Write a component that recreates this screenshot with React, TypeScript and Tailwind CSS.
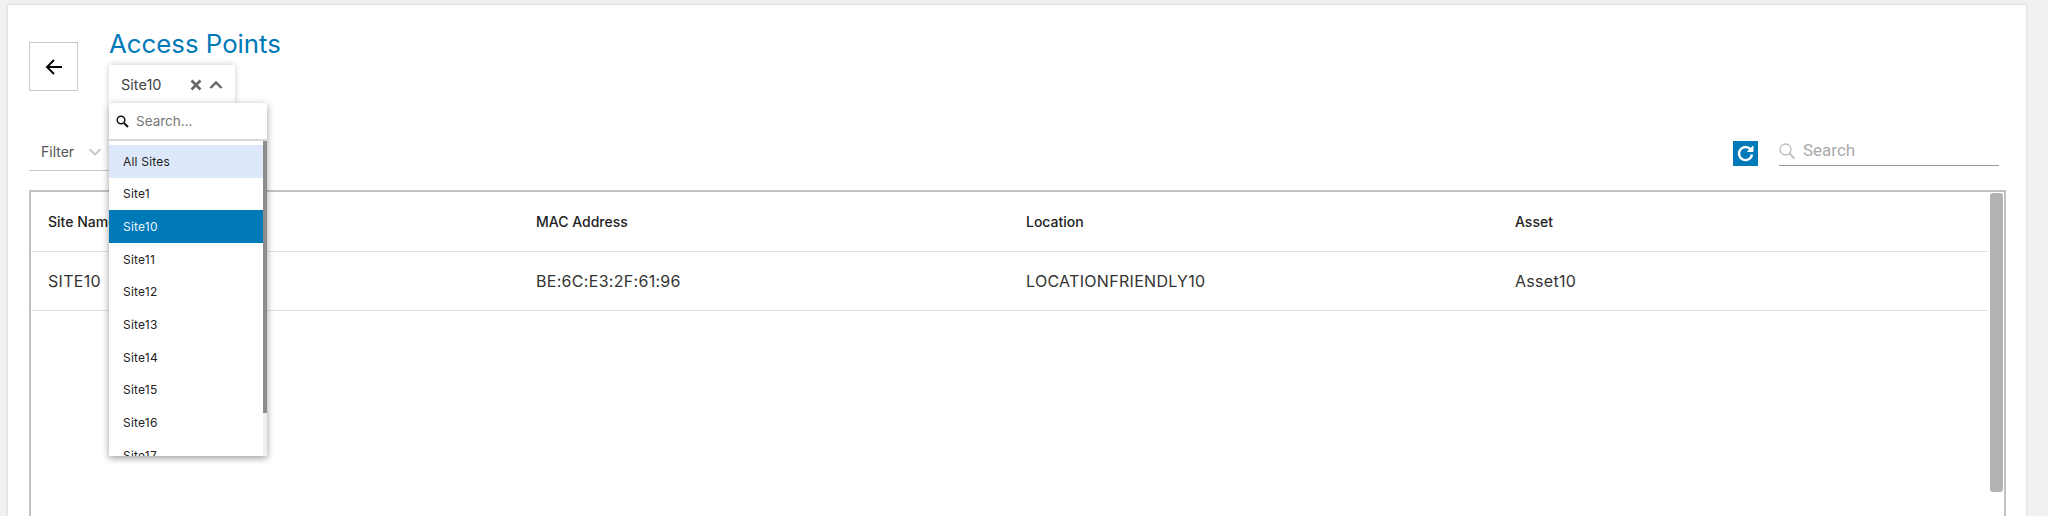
import React from "react";

const sites = ["All Sites","Site1","Site10","Site11","Site12","Site13","Site14","Site15","Site16","Site17"];

export default function App() {
  return (
    <div className="h-[516px] overflow-hidden bg-[#f1f1f1] pl-2 pr-[22px] pt-[5px] font-['Inter',sans-serif] text-[#222]">
      <div className="relative h-[600px] bg-white pl-[21px] pr-5 shadow-[0_0_3px_rgba(0,0,0,0.15)]">
        <div className="flex h-[137px] items-start gap-[31px]">
          <button className="mt-[37px] flex h-[49px] w-[49px] items-center justify-center border border-[#c8c8c8] bg-white text-black">
            <svg width="18" height="18" viewBox="0 0 18 18" fill="none" stroke="currentColor" strokeWidth="1.900"><path d="M17 9H2M9 2L2 9l7 7" /></svg>
          </button>
          <div>
            <h1 className="mt-[21px] text-[25.800px] leading-9 font-normal text-[#0079b8]">Access Points</h1>
            <div className="mt-[3px] flex h-[38px] w-[126px] items-center bg-white pl-3 pr-3 pt-[2px] text-[14.500px] text-[#444] shadow-[0_0_6px_rgba(0,0,0,0.22)]">
              <span className="flex-1">Site10</span>
              <svg width="14" height="14" viewBox="0 0 14 14" fill="none" stroke="#666" strokeWidth="2.600"><path d="M2.500 2.500l9 9M11.500 2.500l-9 9" /></svg>
              <svg className="ml-[6px]" width="14" height="14" viewBox="0 0 14 14" fill="none" stroke="#666" strokeWidth="2.400"><path d="M1.500 10l5.500-5.500L12.500 10" /></svg>
            </div>
          </div>
        </div>

        <div className="flex h-[48px] items-start justify-between">
          <div className="flex h-[29px] w-[180px] items-center border-b border-[#c8c8c8] pb-[9px] pl-3 text-[14px] text-[#555]">
            <span>Filter</span>
            <svg className="ml-[14px]" width="14" height="12" viewBox="0 0 14 12" fill="none" stroke="#c8c8c8" strokeWidth="2"><path d="M1.500 3l5.500 5.500L12.500 3" /></svg>
          </div>
          <div className="-mt-[3px] mr-[7px] flex items-start gap-[21px]">
            <button className="mt-[2px] flex h-[25px] w-[25px] items-center justify-center bg-[#0079b8]">
              <svg width="19" height="19" viewBox="0 0 19 19" fill="none" stroke="#fff" strokeWidth="2.400"><path d="M15 6A6.500 6.500 0 1 0 16 10.500" /><path d="M17 2v5.500h-5.500z" fill="#fff" strokeWidth="1" /></svg>
            </button>
            <div className="flex h-[27px] w-[220px] items-center border-b border-[#9a9a9a] pb-[3px] text-[17px] text-[#aaa] font-['Roboto',sans-serif]">
              <svg width="16" height="16" viewBox="0 0 16 16" fill="none" stroke="#bbb" strokeWidth="1.300"><circle cx="6.500" cy="6.500" r="5.500" /><path d="M10.500 10.500l5 5" strokeWidth="1.800" /></svg>
              <span className="ml-[8px]">Search</span>
            </div>
          </div>
        </div>

        <div className="relative h-[400px] border-2 border-b-0 border-[#c2c2c2] pr-[16px]">
          <div className="grid h-[60px] grid-cols-[488px_490px_489px_1fr] items-center border-b border-[#e2e2e2] pl-[17px] text-[14px] font-medium text-[#222]">
            <span>Site Name</span><span>MAC Address</span><span>Location</span><span>Asset</span>
          </div>
          <div className="grid h-[59px] grid-cols-[488px_490px_489px_1fr] items-center border-b border-[#e2e2e2] pl-[17px] text-[16px] tracking-[0.3px] text-[#333]">
            <span>SITE10</span><span>BE:6C:E3:2F:61:96</span><span>LOCATIONFRIENDLY10</span><span>Asset10</span>
          </div>
          <div className="absolute right-[1px] top-[1px] h-[299px] w-[13px] rounded-[3px] bg-[#b2b2b2]" />
        </div>

        <div className="absolute left-[101px] top-[98px] h-[353px] w-[158px] bg-white shadow-[0_2px_7px_rgba(0,0,0,0.4)]">
          <div className="flex h-[38px] items-center border-b-2 border-[#d8d8d8] pl-[7px] text-[13.500px] text-[#777]">
            <svg width="13" height="13" viewBox="0 0 13 13" fill="none" stroke="#111" strokeWidth="1.500"><circle cx="5" cy="5" r="3.800" /><path d="M8 8l4 4" strokeWidth="2" /></svg>
            <span className="ml-[7px]">Search...</span>
          </div>
          <div className="relative h-[315px] overflow-hidden pt-[4px] text-[12px] tracking-[0.2px]">
            {sites.map((s) => (
              <div
                key={s}
                className={
                  s === "Site10"
                    ? "flex h-[32.670px] items-center bg-[#0079b8] pl-[14px] pt-[1px] text-[#e8f4fa]"
                    : s === "All Sites"
                    ? "flex h-[32.670px] items-center bg-[#dde9fb] pl-[14px] pt-[1px] text-[#222]"
                    : "flex h-[32.670px] items-center pl-[14px] pt-[1px] text-[#222]"
                }
              >
                {s}
              </div>
            ))}
            <div className="absolute bottom-0 right-0 top-0 w-1 bg-[#f0f0f0]">
              <div className="h-[272px] bg-[#8c8c8c]" />
            </div>
          </div>
        </div>
      </div>
    </div>
  );
}
